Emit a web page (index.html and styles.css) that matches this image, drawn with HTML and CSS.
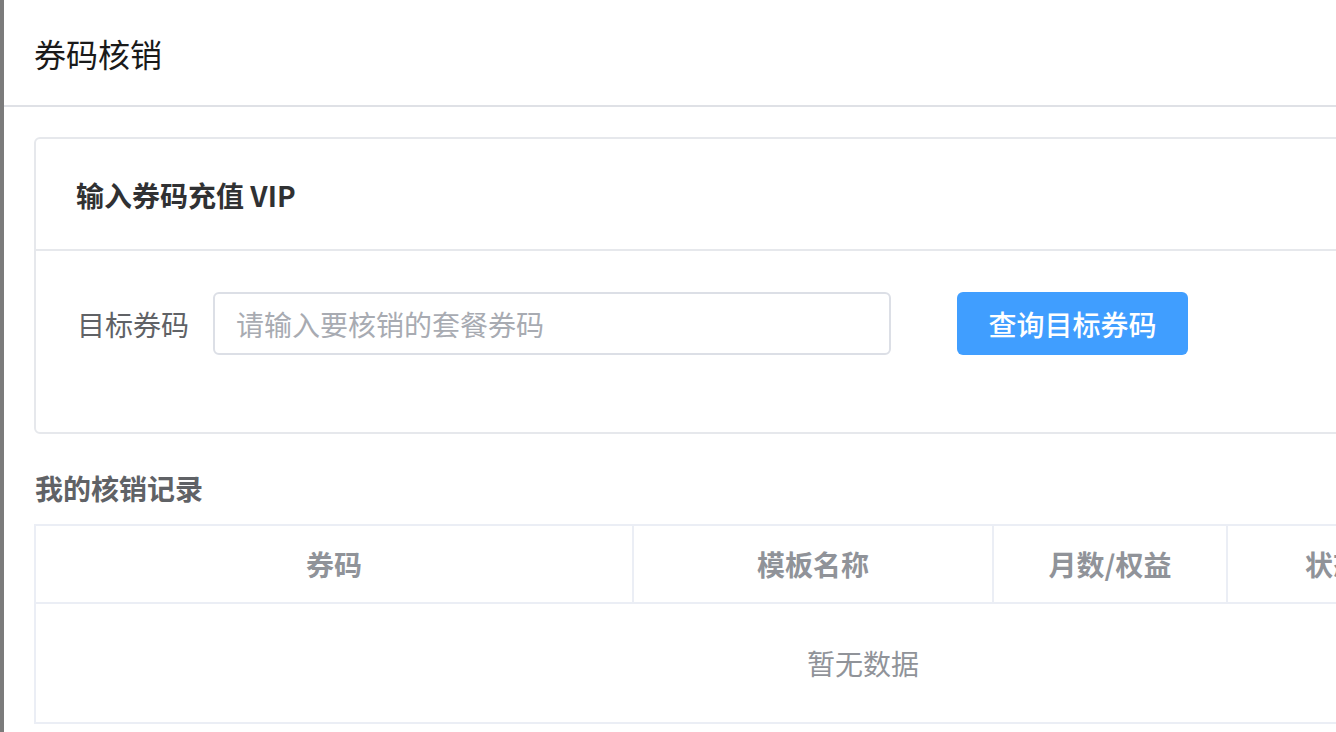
FILE: index.html
```html
<!DOCTYPE html>
<html>
  <head>
    <meta charset="utf-8"/>
    <title>券码核销</title>
    <link rel="stylesheet" href="styles.css">
  </head>
  <body>
    <div class="shade"></div>
    <div class="drawer">
      <div class="drawer-head">
        <span class="drawer-title">券码核销</span>
      </div>
      <div class="drawer-body">
        <div class="card">
          <div class="card-head">输入券码充值 VIP</div>
          <div class="card-body">
            <form class="row" name="coupon">
              <label class="label" for="code">目标券码</label>
              <input class="txt" id="code" name="code" type="text" placeholder="请输入要核销的套餐券码">
              <button class="btn" type="button">查询目标券码</button>
            </form>
          </div>
        </div>

        <div class="section-title">我的核销记录</div>
        <table class="records">
          <colgroup>
            <col style="width:598px">
            <col style="width:360px">
            <col style="width:234px">
            <col style="width:212px">
            <col>
          </colgroup>
          <thead>
            <tr>
              <th>券码</th>
              <th>模板名称</th>
              <th>月数/权益</th>
              <th>状态</th>
              <th>核销时间</th>
            </tr>
          </thead>
          <tbody>
            <tr>
              <td class="empty" colspan="5">暂无数据</td>
            </tr>
          </tbody>
        </table>
      </div>
    </div>
  </body>
</html>
```

FILE: styles.css
```css
html, body{
  margin: 0;
  height: 100%;
}
body{
  display: flex;
  font-family: "Noto Sans CJK SC", "Noto Sans", sans-serif;
  background: #fff;
  overflow: hidden;
}
.shade{
  width: 4px;
  flex: none;
  background: #7b7b7b;
}
.drawer{
  flex: 1;
  min-width: 0;
  background: #fff;
  overflow: hidden;
}
.drawer-head{
  height: 105px;
  display: flex;
  align-items: center;
  padding-left: 30px;
  border-bottom: 2px solid #dfe1e6;
}
.drawer-title{
  font-size: 32px;
  color: #1a1a1a;
}
.drawer-body{
  padding: 30px 0 0 30px;
}
.card{
  width: 1658px;
  border: 2px solid #e6e8ec;
  border-radius: 6px;
}
.card-head{
  height: 112px;
  display: flex;
  align-items: center;
  padding: 1px 40px 0;
  box-sizing: border-box;
  border-bottom: 2px solid #e6e8ec;
  font-size: 28px;
  font-weight: bold;
  color: #303133;
}
.card-body{
  padding: 41px 41px 77px;
}
.row{
  display: flex;
  align-items: center;
  margin: 0;
}
.label{
  font-size: 28px;
  color: #606266;
  margin-right: 24px;
}
.txt{
  width: 678px;
  height: 63px;
  box-sizing: border-box;
  border: 2px solid #dcdfe6;
  border-radius: 6px;
  padding: 0 21px;
  font-family: inherit;
  font-size: 28px;
  color: #606266;
  outline: none;
}
.txt::placeholder{
  color: #a8abb2;
}
.btn{
  margin-left: 66px;
  width: 231px;
  height: 63px;
  border: 0;
  border-radius: 6px;
  background: #409eff;
  color: #fff;
  font-family: inherit;
  font-size: 28px;
  font-weight: 500;
  padding: 0;
}
.section-title{
  margin: 33px 0 15px 1px;
  font-size: 28px;
  line-height: 42px;
  font-weight: bold;
  color: #606266;
}
.records{
  width: 1658px;
  border-collapse: collapse;
  table-layout: fixed;
  border: 2px solid #ebeef5;
}
.records th{
  height: 76px;
  padding: 0;
  border: 2px solid #ebeef5;
  font-size: 28px;
  font-weight: bold;
  color: #909399;
  text-align: center;
}
.records .empty{
  height: 118px;
  padding: 0;
  text-align: center;
  font-size: 28px;
  color: #909399;
}
```
